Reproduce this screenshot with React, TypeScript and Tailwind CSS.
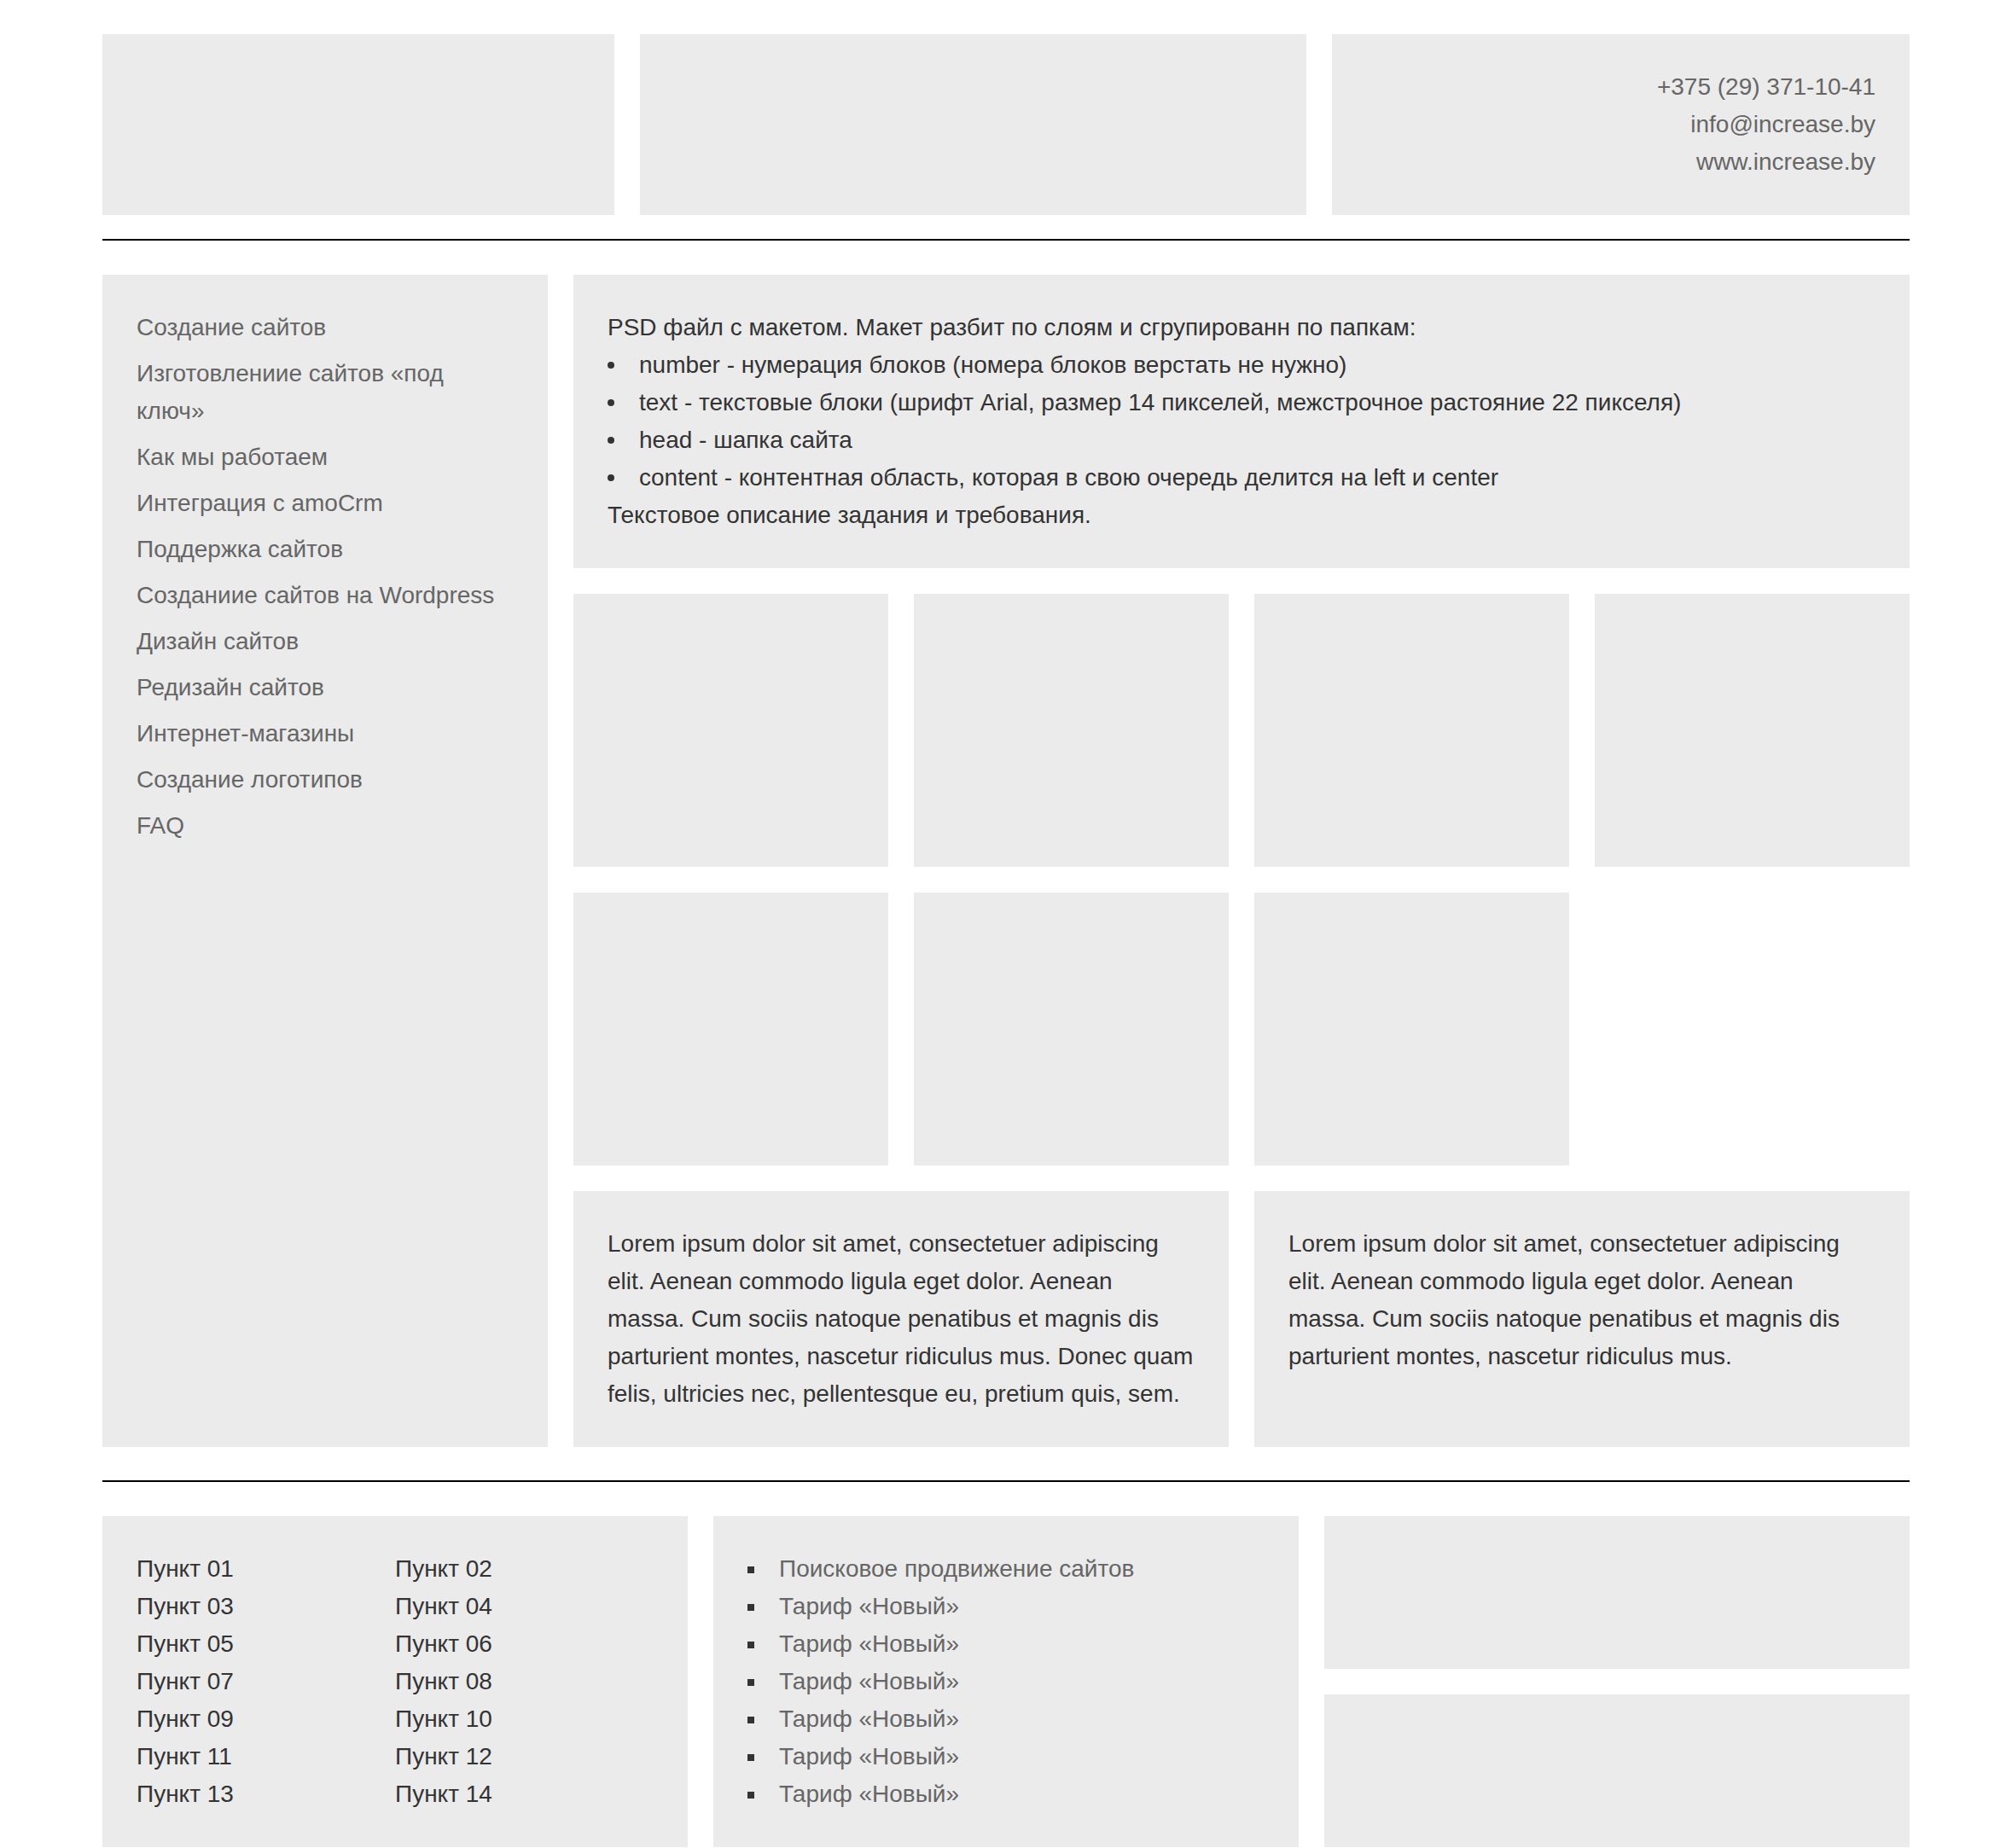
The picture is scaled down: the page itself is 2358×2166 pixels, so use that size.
const menu = [
  "Создание сайтов",
  "Изготовлениие сайтов «под ключ»",
  "Как мы работаем",
  "Интеграция с amoCrm",
  "Поддержка сайтов",
  "Созданиие сайтов на Wordpress",
  "Дизайн сайтов",
  "Редизайн сайтов",
  "Интернет-магазины",
  "Создание логотипов",
  "FAQ",
];

const layers = [
  "number - нумерация блоков (номера блоков верстать не нужно)",
  "text - текстовые блоки (шрифт Arial, размер 14 пикселей, межстрочное растояние 22 пикселя)",
  "head - шапка сайта",
  "content - контентная область, которая в свою очередь делится на left и center",
];

const points = Array.from({ length: 14 }, (_, i) => `Пункт ${String(i + 1).padStart(2, "0")}`);

const tariffs = [
  "Поисковое продвижение сайтов",
  "Тариф «Новый»",
  "Тариф «Новый»",
  "Тариф «Новый»",
  "Тариф «Новый»",
  "Тариф «Новый»",
  "Тариф «Новый»",
];

const App = () => {
  return (
    <div className="min-h-screen bg-white px-[120px] pt-[40px] pb-[40px] font-['Liberation_Sans',Arial,sans-serif] text-[28px] leading-[44px] text-[#333]">
      {/* head */}
      <header className="flex h-[212px] gap-[30px]">
        <div className="w-[600px] bg-[#ebebeb]" />
        <div className="w-[781px] bg-[#ebebeb]" />
        <div className="flex-1 bg-[#ebebeb] px-[40px] py-[40px] text-right text-[#666]">
          <p>+375 (29) 371-10-41</p>
          <p>info@increase.by</p>
          <p>www.increase.by</p>
        </div>
      </header>

      <hr className="mt-[28px] border-t-2 border-black" />

      {/* content */}
      <main className="mt-[40px] flex gap-[30px]">
        <aside className="w-[522px] shrink-0 bg-[#ebebeb] p-[40px]">
          <ul className="flex flex-col gap-[10px] text-[#666]">
            {menu.map((item) => (
              <li key={item}>{item}</li>
            ))}
          </ul>
        </aside>

        <div className="flex flex-1 flex-col gap-[30px]">
          <div className="bg-[#ebebeb] p-[40px]">
            <p>PSD файл с макетом. Макет разбит по слоям и сгрупированн по папкам:</p>
            <ul>
              {layers.map((l) => (
                <li key={l} className="flex items-center">
                  <span className="w-[37px] shrink-0">
                    <span className="block h-[8px] w-[8px] rounded-full bg-[#333]" />
                  </span>
                  <span>{l}</span>
                </li>
              ))}
            </ul>
            <p>Текстовое описание задания и требования.</p>
          </div>

          <div className="grid grid-cols-4 gap-[30px]">
            {Array.from({ length: 7 }, (_, i) => (
              <div key={i} className="h-[320px] bg-[#ebebeb]" />
            ))}
          </div>

          <div className="grid grid-cols-2 gap-[30px]">
            <div className="h-[300px] bg-[#ebebeb] p-[40px]">
              Lorem ipsum dolor sit amet, consectetuer adipiscing elit. Aenean commodo ligula eget dolor. Aenean
              massa. Cum sociis natoque penatibus et magnis dis parturient montes, nascetur ridiculus mus. Donec
              quam felis, ultricies nec, pellentesque eu, pretium quis, sem.
            </div>
            <div className="h-[300px] bg-[#ebebeb] p-[40px]">
              Lorem ipsum dolor sit amet, consectetuer adipiscing elit. Aenean commodo ligula eget dolor. Aenean
              massa. Cum sociis natoque penatibus et magnis dis parturient montes, nascetur ridiculus mus.
            </div>
          </div>
        </div>
      </main>

      <hr className="mt-[39px] border-t-2 border-black" />

      {/* footer */}
      <footer className="mt-[40px] grid grid-cols-3 gap-[30px]">
        <div className="grid grid-cols-2 bg-[#ebebeb] p-[40px]">
          {points.map((p) => (
            <span key={p}>{p}</span>
          ))}
        </div>
        <div className="bg-[#ebebeb] p-[40px]">
          <ul className="text-[#666]">
            {tariffs.map((t, i) => (
              <li key={i} className="flex items-center">
                <span className="w-[37px] shrink-0">
                  <span className="mt-[2px] block h-[8px] w-[8px] bg-[#333]" />
                </span>
                <span>{t}</span>
              </li>
            ))}
          </ul>
        </div>
        <div className="flex flex-col gap-[30px]">
          <div className="flex-1 bg-[#ebebeb]" />
          <div className="flex-1 bg-[#ebebeb]" />
        </div>
      </footer>
    </div>
  );
};

export default App;
